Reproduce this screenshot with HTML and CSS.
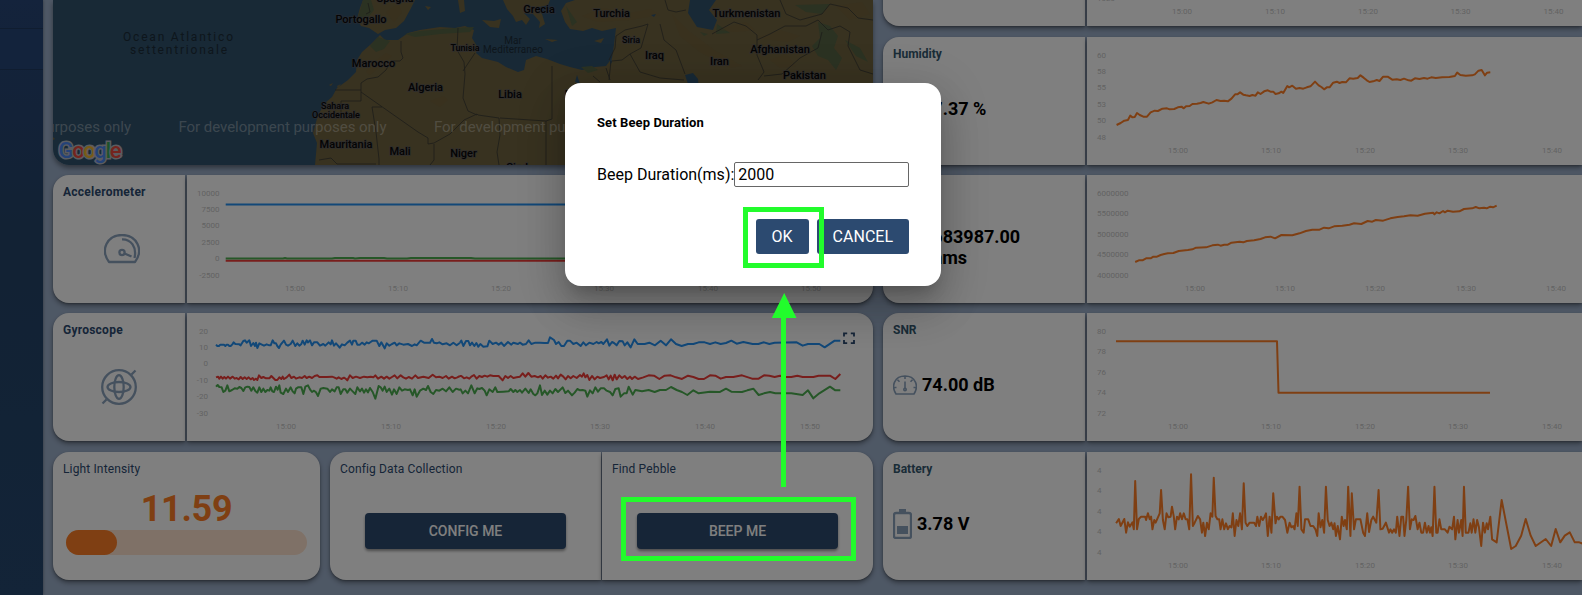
FILE: index.html
```html
<!DOCTYPE html>
<html lang="en">
<head>
<meta charset="utf-8">
<title>Pebble dashboard</title>
<link rel="stylesheet" href="styles.css">
</head>
<body>
<div class="page">
  <nav class="sidebar"><div class="side-top"></div><div class="side-active"></div></nav>
  <main class="board">
    <section class="col-left">
      <div class="map">
        <svg viewBox="53 0 820 165" width="820" height="165">
          <rect class="sea" x="53" width="820" height="165"/>
          <g class="land">
            <path d="M363 0L360 8 357 19 361 26 369 28 378 34 385 30 396 28 404 21 410 10 415 0Z"/>
            <path d="M380 35L370 45 362 52 357 60 356 72 348 80 337 88 332 97 325 103 318 115 313 133 317 143 315 165H873V0H575L566 3 561 11 565 22 570 29 583 31 592 28 602 31 616 28 614 45 612 58 606 66 595 67 582 70 570 67 560 64 547 59 536 56 526 60 524 70 518 72 506 67 498 62 482 58 476 53 478 48 472 38 474 30 465 26 455 28 440 27 420 30 408 33 398 40 385 40Z"/>
            <path d="M503 0L507 9 513 16 516 22 522 20 526 25 530 19 524 13 533 14 540 22 539 28 545 24 542 14 536 8 548 5 550 0ZM458 0L460 13 465 11 464 0ZM482 20L494 21 501 19 499 28 490 27ZM545 39L558 40 552 42ZM594 41L604 38 601 43Z"/>
            <path d="M425 6L431 7 428 10ZM337 86L341 84 338 88ZM329 85L333 83 331 86ZM53 137L55 139 53 140Z"/>
          </g>
          <g class="green">
            <path d="M363 0L358 18 366 20 374 10 371 0ZM378 37L370 46 376 52 384 49 390 41ZM405 34L420 31 455 28 474 27 470 32 440 34 415 37ZM581 67L592 66 598 70 588 73ZM717 24L730 33 716 34ZM700 32L708 34 704 36ZM818 22L830 26 838 36 834 48 842 58 836 70 828 60 818 56 812 46 820 38ZM566 6L577 22 572 26ZM795 5L830 4 822 14 806 12ZM845 40L860 48 868 62 856 56Z"/>
          </g>
          <g class="ridge">
            <path d="M366 72L374 62 386 53 392 56 380 66 370 75ZM386 12L398 4 402 12 394 22ZM582 16L604 8 625 14 650 9 660 15 630 20 598 22ZM672 14L690 32 714 50 742 66 730 68 700 52 680 36ZM756 38L780 30 800 36 788 42ZM716 30L746 22 755 30 736 32ZM430 101L444 96 448 100 440 107ZM770 60L786 54 796 66 780 68ZM836 6L862 2 870 14 850 20Z"/>
          </g>
          <g class="sea">
            <path d="M690 0L688 13 697 27 713 30 717 20 709 10 716 0ZM685 75L693 73 698 79 699 90 688 84ZM651 15L656 14 654 17ZM610 53L612 62 610 65ZM577 75L580 84 575 82Z"/>
          </g>
          <g class="border">
            <path d="M368 3L370 12 366 14M401 41L401 52 403 58 400 61 391 61 386 70 378 77 367 79 361 83 361 101 341 101 341 118M361 92L418 132 428 138 428 144 434 143 450 134 464 120 477 114 478 115 499 118M335 90H361M372 107H382M372 107L376 132 379 159 379 165M319 160L331 158 337 164 376 164M434 144L434 160 430 165M458 28L457 50 464 62 465 74 463 98 468 111 477 115M475 53L463 71M552 66V119L546 121 500 118M546 121V165M499 118L500 135 497 152 499 165M609 60L615 48 616 36 625 30 642 26 648 24 641 48 630 54 622 60 612 61M630 54L640 72 660 78 684 80M660 24L664 40 676 50 682 66 685 74M665 0L668 10 676 12 686 10M712 34L734 22 746 26 757 35 757 55 764 72 758 80M757 40L770 34 785 26 806 26 818 20 828 30M764 76L782 74 800 58 818 48 822 32M780 0L786 14 800 20M828 30L840 26 850 32 848 46 860 70 873 74M800 20L822 14 830 4 848 8 858 18 873 20M606 68L610 80M611 61L609 80M593 76L600 82"/>
          </g>
          <g class="sea-label">
            <text x="123" y="40.500" textLength="110">Ocean Atlantico</text>
            <text x="130" y="54" textLength="97">settentrionale</text>
            <g class="sea-small"><text x="513" y="44">Mar</text><text x="513" y="52.500" textLength="60">Mediterraneo</text></g>
          </g>
          <g class="country">
            <text x="395" y="2">Spagna</text>
            <text x="361" y="23">Portogallo</text><text x="373.500" y="67">Marocco</text><text x="425.500" y="91">Algeria</text>
            <text x="346" y="148">Mauritania</text><text x="400" y="155">Mali</text><text x="463.500" y="157">Niger</text>
            <text x="510" y="98">Libia</text><text x="579" y="98">Egitto</text><text x="517" y="171">Ciad</text>
            <text x="539" y="13">Grecia</text><text x="611.500" y="17">Turchia</text><text x="654.500" y="59">Iraq</text>
            <text x="719.500" y="65">Iran</text><text x="746.500" y="17">Turkmenistan</text><text x="780" y="53">Afghanistan</text><text x="804.500" y="79">Pakistan</text>
          </g>
          <g class="country small"><text x="335" y="108.500">Sahara</text><text x="336" y="117.500">Occidentale</text><text x="465" y="50.500">Tunisia</text><text x="631" y="42.500">Siria</text></g>
          <g class="watermark">
            <text x="-77" y="131.500" textLength="208">For development purposes only</text>
            <text x="178.500" y="131.500" textLength="208">For development purposes only</text>
            <text x="434" y="131.500" textLength="208">For development purposes only</text>
          </g>
          <text class="google" x="58.500" y="158" textLength="63"><tspan fill="#4a86f0">G</tspan><tspan fill="#e8483c">o</tspan><tspan fill="#f0b62e">o</tspan><tspan fill="#4a86f0">g</tspan><tspan fill="#3aa757">l</tspan><tspan fill="#e8483c">e</tspan></text>
        </svg>
      </div>

      <div class="row">
        <div class="cell head start">
          <h3 class="title">Accelerometer</h3>
          <div class="icon-box">
            <svg class="icon" viewBox="0 0 36 30" width="36" height="30"><path d="M5 28C-4 16 3 1 18 1S40 16 31 28Z"/><path d="M18 5.300C27 5 33 13 30.500 24" /><circle cx="18" cy="18.500" r="2.600"/><path d="M20.500 19.500L27.500 22.500"/></svg>
          </div>
        </div>
        <div class="cell chart end">
          <svg viewBox="187 175 686 128" width="686" height="128">
            <g class="ylab"><text x="219.500" y="196">10000</text><text x="219.500" y="212">7500</text><text x="219.500" y="228">5000</text><text x="219.500" y="245">2500</text><text x="219.500" y="261">0</text><text x="219.500" y="278">-2500</text></g>
            <g class="xlab"><text x="295" y="291">15:00</text><text x="398" y="291">15:10</text><text x="501" y="291">15:20</text><text x="604" y="291">15:30</text><text x="708" y="291">15:40</text><text x="811" y="291">15:50</text></g>
            <path class="line blue" d="M225.700 204.500H840"/>
            <path class="line red" d="M225.700 260.800H840"/>
            <path class="line green-line" d="M225.700 258.500H283l2-.5 2 .5h45l3-.5h18l2 .5 5-.5h24l3 .5h20l4-.5h60l4 .5H840"/>
          </svg>
        </div>
      </div>

      <div class="row">
        <div class="cell head start">
          <h3 class="title">Gyroscope</h3>
          <div class="icon-box shift">
            <svg class="icon" viewBox="0 0 36 36" width="36" height="36"><circle cx="18" cy="18" r="16.800"/><ellipse cx="18" cy="18" rx="11.500" ry="5"/><ellipse cx="18" cy="18" rx="4.700" ry="11.800"/><path d="M30.500 5.500L34.500 1.500M5.500 30.500L1.500 34.500"/></svg>
          </div>
        </div>
        <div class="cell chart end">
          <svg viewBox="187 313 686 128" width="686" height="128">
            <g class="ylab"><text x="208" y="334">20</text><text x="208" y="350">10</text><text x="208" y="366">0</text><text x="208" y="383">-10</text><text x="208" y="399">-20</text><text x="208" y="416">-30</text></g>
            <g class="xlab"><text x="286" y="429">15:00</text><text x="391" y="429">15:10</text><text x="496" y="429">15:20</text><text x="600" y="429">15:30</text><text x="705" y="429">15:40</text><text x="810" y="429">15:50</text></g>
            <g transform="translate(40 300) scale(.33333)">
              <polyline class="line blue" points="528,134 532,138 537,138 541,134 552,134 556,138 560,134 564,134 568,138 572,138 577,133 581,127 586,132 598,133 602,136 610,123 615,121 620,128 628,121 633,138 640,129 645,138 648,128 652,144 658,130 664,133 672,137 680,133 688,136 692,136 698,121 703,130 708,130 712,138 717,144 722,134 732,122 738,134 744,137 752,132 758,122 766,138 772,130 778,137 784,132 788,122 794,134 800,121 804,127 810,121 816,136 822,127 832,127 840,137 850,132 856,137 866,127 872,133 876,121 882,137 888,130 894,137 899,143 906,133 914,136 922,128 930,122 936,134 940,122 947,122 952,134 960,134 966,128 974,134 980,127 986,130 992,126 998,122 1010,122 1018,138 1024,127 1034,145 1040,130 1048,137 1056,132 1064,128 1070,136 1078,130 1090,134 1104,132 1116,138 1124,133 1130,136 1142,122 1152,128 1170,128 1176,117 1182,128 1190,130 1198,127 1208,133 1220,130 1230,136 1240,128 1250,136 1260,128"/>
              <polyline class="line red" points="528,232 534,230 538,236 543,230 548,236 553,231 558,236 564,230 570,236 578,230 584,236 590,234 596,238 602,231 608,237 614,232 620,237 626,232 632,238 638,234 642,240 648,236 652,240 657,226 664,234 670,231 678,235 688,235 694,228 700,234 706,240 712,240 718,232 724,237 728,230 732,237 740,232 748,224 754,234 762,230 768,236 778,232 786,234 794,228 800,234 808,230 816,234 824,228 832,226 838,231 860,231 876,230 882,232 890,236 896,232 904,237 912,233 918,237 922,241 930,226 938,234 948,230 960,234 972,230 982,232 992,230 1000,232 1006,226 1014,236 1024,230 1032,236 1040,230 1048,236 1056,231 1064,226 1072,235 1082,226 1090,232 1098,236 1106,231 1116,236 1126,226 1134,234 1150,230 1166,234 1178,224 1188,232 1198,230 1208,234 1218,228 1226,236 1236,230 1244,235 1252,232 1260,228"/>
              <polyline class="line green-line" points="528,260 533,255 538,261 545,262 550,276 556,272 562,256 568,274 576,270 584,265 592,266 598,261 604,264 610,273 616,262 622,260 628,261 634,272 640,262 646,273 652,278 658,262 664,276 670,266 676,276 682,270 688,272 692,262 697,274 702,276 708,260 713,269 718,256 722,278 730,282 738,266 744,276 752,262 758,274 764,280 768,266 774,262 784,262 790,282 796,260 804,256 810,268 816,276 822,272 828,277 834,288 842,266 850,264 862,266 870,276 876,268 884,274 890,262 896,262 902,282 910,268 916,268 922,278 930,266 938,274 946,282 952,262 960,274 966,266 972,278 978,268 984,277 990,264 998,276 1006,296 1016,258 1022,262 1028,272 1034,260 1040,276 1048,266 1056,284 1062,268 1070,282 1078,262 1086,272 1094,268 1104,270 1110,268 1118,286 1124,268 1130,290 1140,272 1150,266 1158,270 1164,258 1172,276 1180,282 1188,270 1198,272 1208,266 1218,274 1228,262 1238,276 1248,266 1260,270"/>
            </g>
            <g transform="translate(450 270) scale(.33333)">
              <polyline class="line blue" points="30,218 34,212 40,228 48,213 55,213 60,226 66,218 73,228 79,219 85,230 91,222 100,230 112,229 118,212 128,222 138,218 146,224 154,218 162,228 174,216 184,224 190,218 204,222 210,218 218,224 228,222 236,211 244,222 256,218 270,218 284,219 294,219 300,202 312,210 318,222 326,216 334,228 342,228 352,212 360,212 370,222 380,218 392,228 400,217 408,226 418,218 430,222 440,216 446,220 454,216 460,222 471,208 478,227 486,216 492,219 500,226 508,213 518,214 524,226 532,217 542,232 553,208 563,222 584,222 598,218 615,226 632,212 648,226 663,208 678,222 695,228 714,222 730,222 746,217 764,217 780,222 796,217 812,222 828,219 844,212 860,221 880,216 908,222 925,222 942,217 958,222 974,218 1040,217 1058,227 1074,222 1108,222 1124,232 1154,212 1171,212"/>
              <polyline class="line red" points="30,318 34,318 42,325 50,322 58,326 64,320 72,315 80,326 88,318 96,321 104,317 112,320 120,316 130,318 146,318 158,331 166,318 174,324 182,318 190,324 200,322 210,320 218,310 226,320 235,309 244,320 254,318 264,322 272,318 278,326 286,316 294,323 302,320 310,326 318,317 324,325 332,314 340,320 347,328 354,318 362,325 370,318 380,324 390,315 396,320 401,310 406,322 412,315 418,330 426,318 434,328 442,320 450,324 462,321 470,316 476,328 482,317 488,331 494,314 500,328 508,316 516,324 524,318 532,327 540,320 546,327 554,320 564,327 580,322 596,316 612,317 628,327 644,317 662,316 678,322 696,327 714,317 730,321 746,327 762,327 780,316 796,317 812,326 828,321 850,321 876,316 906,326 926,326 942,316 958,317 974,321 990,317 1006,321 1024,321 1042,317 1058,321 1090,321 1106,317 1140,317 1156,327 1171,312"/>
              <polyline class="line green-line" points="30,360 32,358 38,370 46,362 54,370 64,346 74,370 82,355 88,357 96,354 104,362 110,376 118,358 128,366 136,352 142,366 160,365 176,364 182,357 190,366 196,360 202,366 210,360 216,368 226,356 236,369 242,358 250,372 256,376 262,370 270,346 276,375 284,362 292,374 300,362 308,370 316,357 324,366 338,352 346,369 354,362 366,376 374,368 382,357 390,361 398,360 406,362 412,380 420,361 428,370 436,352 444,365 452,355 462,355 470,362 480,366 488,376 496,357 506,355 512,380 522,370 530,370 536,350 548,374 556,360 576,364 596,360 614,366 630,360 648,360 663,351 680,360 696,366 712,375 730,361 746,370 780,365 810,366 828,356 844,365 876,366 892,361 910,356 926,375 942,370 960,366 976,370 1024,370 1058,375 1074,361 1090,385 1108,370 1140,350 1156,361 1171,361"/>
            </g>
            <path class="expand" d="M844 336.500V333.300H847.200M850.800 333.300H854V336.500M854 340V343.200H850.800M847.200 343.200H844V340"/>
          </svg>
        </div>
      </div>

      <div class="row tools">
        <div class="cell light">
          <h3 class="title thin">Light Intensity</h3>
          <div class="lux">11.59</div>
          <div class="meter"><div class="meter-fill"></div></div>
        </div>
        <div class="pair">
          <div class="cell tool start"><h3 class="title thin">Config Data Collection</h3><button class="action">CONFIG ME</button></div>
          <div class="cell tool end"><h3 class="title thin">Find Pebble</h3><button class="action">BEEP ME</button></div>
        </div>
      </div>
    </section>

    <section class="col-right">
      <div class="row">
        <div class="cell head start"></div>
        <div class="cell chart"><svg viewBox="1087 -102 495 128" width="495" height="128">
          <g class="ylab left"><text x="1097" y="1">1020</text></g>
          <g class="xlab"><text x="1182" y="14">15:00</text><text x="1275" y="14">15:10</text><text x="1368" y="14">15:20</text><text x="1460.500" y="14">15:30</text><text x="1553.500" y="14">15:40</text></g>
        </svg></div>
      </div>
      <div class="row">
        <div class="cell head start">
          <h3 class="title alt">Humidity</h3>
          <div class="value"><span class="value-icon"></span><span>57.37 %</span></div>
        </div>
        <div class="cell chart"><svg viewBox="1087 37 495 128" width="495" height="128">
          <g class="ylab left"><text x="1097" y="58">60</text><text x="1097" y="74">58</text><text x="1097" y="90">55</text><text x="1097" y="107">53</text><text x="1097" y="123">50</text><text x="1097" y="140">48</text></g>
          <g class="xlab"><text x="1178" y="153">15:00</text><text x="1271" y="153">15:10</text><text x="1365" y="153">15:20</text><text x="1458" y="153">15:30</text><text x="1552" y="153">15:40</text></g>
          <g transform="translate(870 0) scale(.45410 .33333)"><polyline class="line orange" points="543,375 552,369 560,362 568,360 573,347 578,352 583,351 588,339 594,345 602,350 610,350 618,337 627,332 634,333 644,326 654,325 660,328 670,327 678,322 686,320 691,325 696,319 704,318 710,312 720,311 728,309 734,306 746,311 754,307 763,300 772,303 780,302 788,304 796,296 804,283 809,283 815,277 822,284 828,286 836,288 842,285 849,287 854,277 860,282 868,274 876,271 882,275 888,275 893,282 900,280 906,275 910,279 919,258 923,262 930,257 938,266 946,264 954,266 962,262 970,259 980,245 988,256 994,261 1000,268 1006,262 1012,262 1020,248 1028,245 1034,249 1040,246 1048,247 1056,235 1064,236 1074,234 1080,226 1087,233 1094,241 1100,246 1108,244 1116,240 1122,243 1130,230 1140,230 1150,239 1160,238 1168,240 1176,236 1186,241 1192,242 1200,235 1210,237 1220,234 1228,236 1236,232 1246,234 1260,232 1276,231 1288,228 1293,218 1300,225 1312,227 1326,226 1332,223 1340,212 1347,210 1354,226 1359,218 1366,217"/></g>
        </svg></div>
      </div>
      <div class="row">
        <div class="cell head start">
          <h3 class="title alt">&nbsp;</h3>
          <div class="value"><span class="value-icon"></span><span>5683987.00<br>ohms</span></div>
        </div>
        <div class="cell chart"><svg viewBox="1087 175 495 128" width="495" height="128">
          <g class="ylab left"><text x="1097" y="196">6000000</text><text x="1097" y="216">5500000</text><text x="1097" y="237">5000000</text><text x="1097" y="257">4500000</text><text x="1097" y="278">4000000</text></g>
          <g class="xlab"><text x="1195" y="291">15:00</text><text x="1285" y="291">15:10</text><text x="1375" y="291">15:20</text><text x="1466" y="291">15:30</text><text x="1556" y="291">15:40</text></g>
          <g transform="translate(870 165) scale(.45410 .33333)"><polyline class="line orange" points="584,291 592,286 600,286 608,280 618,280 624,275 632,275 640,270 648,267 656,265 668,264 680,258 700,255 710,253 718,248 740,247 754,241 766,239 772,242 780,239 788,239 796,233 814,230 822,232 830,228 846,226 860,222 870,217 882,215 892,220 906,210 930,211 946,205 960,198 974,194 990,194 1000,188 1010,190 1022,184 1040,182 1056,179 1066,175 1082,177 1096,168 1106,170 1114,165 1130,167 1146,160 1162,156 1176,154 1190,151 1206,152 1222,146 1240,143 1243,148 1248,142 1254,145 1262,138 1266,142 1272,137 1284,140 1298,139 1308,132 1326,130 1334,126 1342,130 1352,128 1358,130 1366,125 1372,127 1380,122"/></g>
        </svg></div>
      </div>
      <div class="row">
        <div class="cell head start">
          <h3 class="title alt">SNR</h3>
          <div class="value"><svg class="icon value-icon" viewBox="0 0 24 20" width="24" height="20"><path d="M3 19C-2.500 10.500 2 1 12 1S26.500 10.500 21 19ZM12 1V4M4.500 4.800L6.500 6.800M19.500 4.800L17.500 6.800M1 12.500H3.500M23 12.500H20.500"/><path d="M12 6.500V13"/><circle cx="12" cy="14.500" r="1.200"/></svg><span>74.00 dB</span></div>
        </div>
        <div class="cell chart"><svg viewBox="1087 313 495 128" width="495" height="128">
          <g class="ylab left"><text x="1097" y="334">80</text><text x="1097" y="354">78</text><text x="1097" y="375">76</text><text x="1097" y="395">74</text><text x="1097" y="416">72</text></g>
          <g class="xlab"><text x="1178" y="429">15:00</text><text x="1271" y="429">15:10</text><text x="1365" y="429">15:20</text><text x="1458" y="429">15:30</text><text x="1552" y="429">15:40</text></g>
          <path class="line orange" d="M1116 341.300H1277L1278.500 392.800H1490"/>
        </svg></div>
      </div>
      <div class="row">
        <div class="cell head start">
          <h3 class="title alt">Battery</h3>
          <div class="value"><svg class="value-battery" viewBox="0 0 19 30" width="19" height="30"><path d="M6 0H13V3H6Z"/><path class="outline" d="M3 4H16Q18 4 18 6V27Q18 29 16 29H3Q1 29 1 27V6Q1 4 3 4Z"/><path d="M4 17H15V25H4Z"/></svg><span>3.78 V</span></div>
        </div>
        <div class="cell chart"><svg viewBox="1087 452 495 128" width="495" height="128">
          <g class="ylab left"><text x="1097" y="473">4</text><text x="1097" y="493">4</text><text x="1097" y="514">4</text><text x="1097" y="534">4</text><text x="1097" y="555">4</text></g>
          <g class="xlab"><text x="1178" y="568">15:00</text><text x="1271" y="568">15:10</text><text x="1365" y="568">15:20</text><text x="1458" y="568">15:30</text><text x="1552" y="568">15:40</text></g>
          <g transform="translate(870 440) scale(.45410 .33333)"><polyline class="line orange" points="542,250 548,237 552,258 560,237 564,278 568,247 572,260 578,247 581,268 584,123 588,268 592,237 597,230 606,230 608,240 612,220 616,238 619,230 622,268 626,240 629,248 638,220 641,150 645,240 649,268 653,220 657,232 662,230 665,200 669,230 672,268 676,230 680,238 683,220 687,238 691,220 695,238 699,238 703,268 707,103 711,258 715,248 722,228 727,238 731,278 734,248 738,288 742,248 746,268 750,220 754,230 757,113 761,228 765,238 769,238 772,268 776,238 780,268 784,250 788,268 792,258 796,262 799,220 803,288 807,240 811,258 815,220 819,268 823,130 827,248 831,258 836,248 846,248 850,258 853,230 857,258 861,230 865,240 869,230 872,220 876,288 880,230 884,278 888,160 893,250 896,230 900,238 904,230 908,230 914,240 919,278 924,248 928,262 932,258 935,268 939,220 942,258 946,140 950,268 955,278 958,238 965,238 970,258 976,258 981,268 985,288 988,220 992,262 996,240 1000,278 1004,140 1008,240 1012,258 1016,248 1020,268 1023,250 1026,288 1030,258 1035,298 1039,230 1043,258 1046,240 1050,268 1053,140 1058,288 1061,160 1066,268 1070,238 1080,238 1086,278 1090,288 1095,220 1099,276 1104,240 1108,230 1115,248 1120,150 1124,268 1129,266 1136,248 1143,278 1146,268 1150,278 1154,268 1158,278 1161,230 1166,288 1170,230 1174,230 1177,288 1181,240 1185,140 1189,268 1193,238 1197,240 1201,228 1206,268 1210,248 1214,278 1218,278 1222,248 1226,278 1230,258 1233,278 1236,262 1239,288 1243,140 1247,278 1250,278 1254,238 1258,268 1266,268 1272,278 1276,260 1282,268 1286,230 1289,298 1294,240 1297,278 1302,240 1305,288 1308,140 1312,278 1318,278 1322,250 1325,278 1329,238 1333,278 1337,240 1341,262 1346,318 1350,248 1354,278 1358,250 1361,268 1366,230 1370,298 1380,307 1391,180 1412,327 1422,318 1434,287 1444,237 1455,287 1466,318 1488,297 1500,318 1510,267 1520,307 1530,287 1541,277 1552,307 1562,307 1570,311"/></g>
        </svg></div>
      </div>
    </section>
  </main>
</div>

<div class="backdrop">
  <div class="dialog">
    <h2 class="dialog-title">Set Beep Duration</h2>
    <label class="field">Beep Duration(ms):<input class="duration" type="text" value="2000"></label>
    <div class="dialog-actions"><button class="btn">OK</button><button class="btn">CANCEL</button></div>
  </div>
</div>

<svg class="annotations" viewBox="0 0 1582 595" width="1582" height="595">
  <path class="mark" d="M745.500 209.500H821.500V265.500H745.500ZM623.500 499.500H853.500V558.500H623.500Z"/>
  <path class="arrow" d="M784.200 293L796.500 318H786V487H781V318H771.800Z"/>
</svg>
</body>
</html>
```

FILE: styles.css
```css
* { box-sizing: border-box; }
body {
  margin: 0;
  width: 1582px;
  height: 595px;
  overflow: hidden;
  font-family: Roboto, sans-serif;
}
svg { display: block; }
h2, h3 { margin: 0; }

.page { display: flex; height: 595px; background: #9db0cb; }
.sidebar {
  width: 43px;
  flex: none;
  background: linear-gradient(#284678, #244468 40%, #264870);
  box-shadow: 0 0 3px rgba(0, 0, 0, .4);
}
.side-top { height: 28px; }
.side-active {
  height: 42px;
  border-top: 1px solid #213a60;
  border-bottom: 1px solid #213a60;
  background: #274679;
}

.board { display: flex; gap: 10px; padding-left: 10px; }
.col-left, .col-right { display: flex; flex-direction: column; gap: 10px; }
.col-left { width: 820px; }
.col-right { width: 699px; }

.row { display: flex; gap: 2px; height: 128px; flex: none; }
.row:last-child { margin-top: 1px; }
.col-right .row:first-child { height: 26px; margin-bottom: 1px; align-items: flex-end; }
.col-right .row:first-child .cell { height: 128px; }
.cell {
  background: #fff;
  box-shadow: 0 3px 5px rgba(0, 0, 0, .35), 0 1px 2px rgba(0, 0, 0, .25);
}
.start { border-radius: 16px 0 0 16px; }
.end { border-radius: 0 16px 16px 0; }
.col-left .head { width: 132px; }
.col-right .head { width: 202px; flex: none; }
.head { display: flex; flex-direction: column; padding: 9px 10px 10px; }
.chart { flex: 1; overflow: hidden; }

.title {
  font-size: 12px;
  line-height: 16px;
  font-weight: 700;
  letter-spacing: .25px;
  color: #2c4a70;
}
.title.thin { font-weight: 400; letter-spacing: .14px; }
.title.alt { color: #34586f; letter-spacing: 0; }
.icon-box { flex: 1; display: flex; align-items: center; justify-content: center; padding: 5px 0 0 6px; }
.icon-box.shift { padding-left: 0; padding-right: 0; }
.icon { fill: none; stroke: #8ba2bd; stroke-width: 2.300; stroke-linejoin: round; flex: none; }
.icon.value-icon { stroke-width: 1.600; }
.value {
  flex: 1;
  display: flex;
  align-items: center;
  gap: 5px;
  font-size: 18px;
  line-height: 21px;
  font-weight: 700;
  color: #000;
}
.value-icon { width: 24px; flex: none; }
.value-battery { fill: #8ba2bd; flex: none; }
.value-battery .outline { fill: none; stroke: #8ba2bd; stroke-width: 2.300; }

/* charts */
.ylab text, .xlab text { font-size: 8px; fill: #c6c6c6; }
.ylab text { text-anchor: end; }
.ylab.left text { text-anchor: start; }
.xlab text { text-anchor: middle; }
.line { fill: none; stroke-width: 2; stroke-linejoin: round; vector-effect: non-scaling-stroke; }
.blue { stroke: #2490f0; }
.red { stroke: #f03c38; }
.green-line { stroke: #4caf50; }
.orange { stroke: #ff7f27; }
.expand { fill: none; stroke: #2c4a70; stroke-width: 1.800; }

/* map */
.map { height: 165px; border-radius: 0 0 16px 16px; overflow: hidden; box-shadow: 0 3px 5px rgba(0, 0, 0, .4); }
.sea { fill: #30526c; }
.land { fill: #706440; }
.green { fill: #566444; }
.ridge { fill: #7c6036; opacity: .3; }
.border { fill: none; stroke: #3a3a34; stroke-width: .8; }
.country text {
  font-size: 11px;
  font-weight: 500;
  text-anchor: middle;
  fill: #080808;
  stroke: #565664;
  stroke-width: 1.600px;
  stroke-opacity: .7;
  paint-order: stroke;
}
.country.small text { font-size: 9px; }
.sea-label { font-size: 12px; fill: #1c2c38; }
.sea-small { font-size: 10px; text-anchor: middle; }
.watermark { font-size: 15px; fill: #fff; fill-opacity: .36; }
.google {
  font-size: 22px;
  font-weight: 500;
  stroke: #b4b8c0;
  stroke-width: 3px;
  paint-order: stroke;
}

/* bottom row */
.tools { gap: 10px; }
.light { width: 267px; border-radius: 16px; padding: 9px 13px 0 13px; }
.light .title { margin-left: -3px; }
.lux {
  margin-top: 11px;
  font-size: 36px;
  line-height: 42px;
  font-weight: 700;
  letter-spacing: -.3px;
  text-align: center;
  color: #ff7f27;
}
.meter { height: 25px; border-radius: 13px; background: #ffe3cf; }
.meter-fill { width: 51px; height: 25px; border-radius: 13px; background: #ff7f27; }
.pair { display: flex; gap: 1px; width: 543px; }
.tool { width: 271px; padding: 9px 0 0 10px; }
.action {
  display: block;
  width: 201px;
  height: 36px;
  margin: 36px 0 0 25px;
  padding: 0;
  border: 0;
  border-radius: 4px;
  background: #2d4a6e;
  box-shadow: 0 2px 3px rgba(0, 0, 0, .4);
  color: #fff;
  font: 500 14px Roboto, sans-serif;
}

/* dialog */
.backdrop { position: absolute; inset: 0; background: rgba(0, 0, 0, .5); padding: 83px 0 0 565px; }
.dialog {
  width: 376px;
  height: 203px;
  padding: 32px;
  border-radius: 16px;
  background: #fff;
  box-shadow: 0 11px 15px -7px rgba(0, 0, 0, .2), 0 24px 38px 3px rgba(0, 0, 0, .14), 0 9px 46px 8px rgba(0, 0, 0, .12);
}
.dialog-title { font-size: 13px; line-height: 15px; font-weight: 700; letter-spacing: .1px; }
.field { display: flex; align-items: center; margin-top: 32px; font-size: 16px; white-space: nowrap; }
.duration {
  flex: 1;
  min-width: 0;
  height: 25px;
  padding: 1px 3px;
  border: 1px solid #666;
  border-radius: 2px;
  font: 16px Roboto, sans-serif;
}
.dialog-actions { display: flex; justify-content: flex-end; gap: 8px; margin-top: 32px; }
.btn {
  height: 35px;
  padding: 0 16px;
  border: 0;
  border-radius: 3px;
  background: #2c4a70;
  color: #fff;
  font: 16px Roboto, sans-serif;
}

.annotations { position: absolute; left: 0; top: 0; pointer-events: none; }
.mark { fill: none; stroke: #22fc2c; stroke-width: 5; }
.arrow { fill: #22fc2c; }
```
